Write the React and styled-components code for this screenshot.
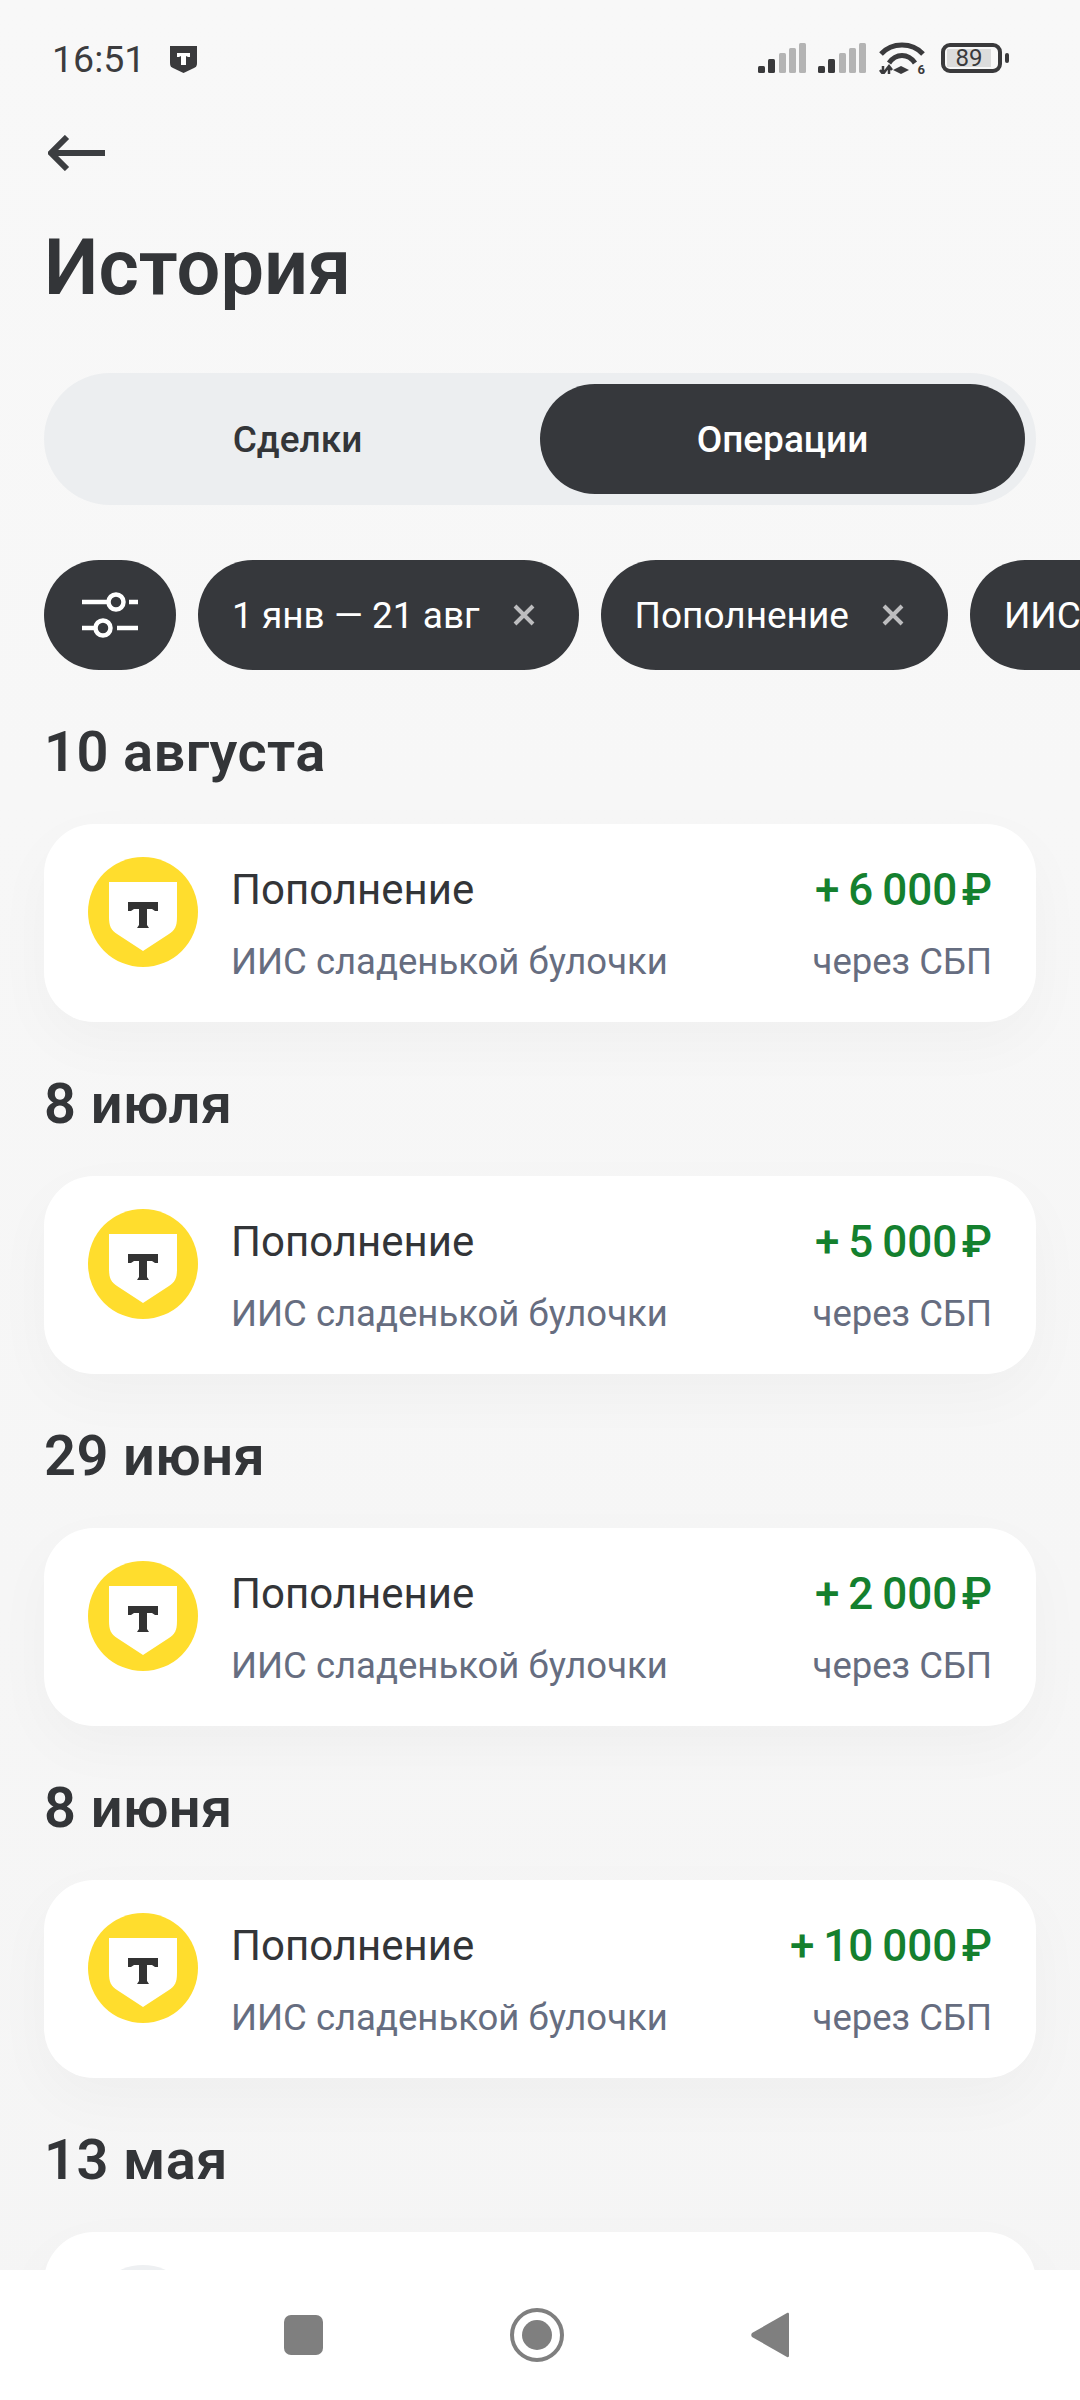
import React from 'react';
import styled, { createGlobalStyle } from 'styled-components';

const GlobalStyle = createGlobalStyle`
  html, body {
    margin: 0;
    padding: 0;
    background: #f6f6f7;
  }
  * {
    box-sizing: border-box;
  }
`;

const Screen = styled.div`
  width: 1080px;
  height: 2400px;
  display: flex;
  flex-direction: column;
  overflow: hidden;
  background: linear-gradient(#f8f8f8, #f5f5f5);
  font-family: Roboto, 'Noto Sans', sans-serif;
  color: #333538;
`;

const Content = styled.div`
  flex: 1;
  min-height: 0;
  overflow: hidden;
  display: flex;
  flex-direction: column;
`;

const StatusBar = styled.div`
  height: 118px;
  flex: none;
  display: flex;
  align-items: center;
  padding: 0 71px 0 52px;
`;

const Time = styled.span`
  font-size: 37.5px;
  line-height: 40px;
  color: #3c3c3e;
  margin-right: 25px;
`;

const StatusIcons = styled.div`
  margin-left: auto;
  display: flex;
  align-items: center;
  margin-top: -3px;
`;

const WifiBox = styled.div`
  position: relative;
  width: 46px;
  height: 32px;
  margin: 0 16px 0 13px;
`;

const WifiNumber = styled.span`
  position: absolute;
  right: 0;
  bottom: -2px;
  font-size: 13px;
  line-height: 13px;
  font-weight: 700;
  color: #3a3a3c;
`;

const Battery = styled.div`
  width: 61px;
  height: 30px;
  border: 4px solid #3a3a3c;
  border-radius: 9px;
  padding: 2px 7px 2px 2px;
  display: flex;
`;

const BatteryLevel = styled.div`
  flex: 1;
  background: #dcdcdc;
  font-size: 24px;
  line-height: 18px;
  text-align: center;
  color: #3a3a3c;
`;

const BatteryNub = styled.div`
  width: 4px;
  height: 10px;
  margin-left: 3px;
  border-radius: 2px;
  background: #3a3a3c;
`;

const BackRow = styled.div`
  height: 70px;
  flex: none;
  display: flex;
  align-items: center;
  padding-left: 48px;
`;

const Title = styled.h1`
  margin: 35px 0 0;
  padding-left: 44px;
  font-size: 77.5px;
  line-height: 90px;
  font-weight: 600;
  color: #333538;
`;

const Segment = styled.div`
  flex: none;
  margin: 60px 44px 0;
  height: 132px;
  padding: 11px;
  border-radius: 66px;
  background: #eceef0;
  display: grid;
  grid-template-columns: 1fr 1fr;
`;

const SegmentItem = styled.div`
  display: flex;
  align-items: center;
  justify-content: center;
  border-radius: 55px;
  font-size: 37px;
  font-weight: 500;
  background: ${(props) => (props.active ? '#36383c' : 'transparent')};
  color: ${(props) => (props.active ? '#fff' : '#333538')};
`;

const Chips = styled.div`
  flex: none;
  margin-top: 55px;
  padding-left: 44px;
  display: flex;
  gap: 22px;
  height: 110px;
  overflow: hidden;
`;

const FilterButton = styled.div`
  flex: none;
  width: 132px;
  border-radius: 55px;
  background: #36383c;
  display: flex;
  align-items: center;
  justify-content: center;
`;

const Chip = styled.div`
  flex: none;
  display: flex;
  align-items: center;
  gap: 33px;
  padding: 0 44px 0 34px;
  border-radius: 55px;
  background: #36383c;
  color: #fff;
  font-size: 37px;
  white-space: nowrap;
`;

const DateTitle = styled.h2`
  margin: 0;
  padding-left: 44px;
  font-size: 56px;
  line-height: 64px;
  font-weight: 600;
  letter-spacing: 0.4px;
  color: #333538;
`;

const Section = styled.section`
  flex: none;
  margin-top: 50px;
`;

const Card = styled.div`
  margin: 40px 44px 0;
  height: 198px;
  padding: 33px 44px 0;
  border-radius: 50px;
  background: #fff;
  box-shadow: 0 20px 60px rgba(0, 0, 0, 0.03);
  display: flex;
  align-items: flex-start;
  gap: 33px;
`;

const CardBody = styled.div`
  flex: 1;
  margin-top: 8px;
  display: grid;
  grid-template-columns: 1fr auto;
  row-gap: 22px;
`;

const Name = styled.div`
  font-size: 42px;
  line-height: 50px;
  color: #333538;
`;

const Amount = styled.div`
  font-size: 44px;
  line-height: 50px;
  font-weight: 500;
  color: #14802e;
  text-align: right;
`;

const Note = styled.div`
  font-size: 36.5px;
  line-height: 50px;
  color: #666d80;
  text-align: ${(props) => (props.right ? 'right' : 'left')};
`;

const NavBar = styled.div`
  flex: none;
  height: 130px;
  background: #fff;
  display: flex;
  align-items: center;
  padding-left: 284px;
`;

const NavSquare = styled.div`
  width: 39px;
  height: 40px;
  border-radius: 7px;
  background: #7f7f7f;
  margin-right: 187px;
`;

const NavCircle = styled.div`
  width: 54px;
  height: 54px;
  border-radius: 50%;
  border: 4px solid #7f7f7f;
  display: flex;
  align-items: center;
  justify-content: center;
  margin-right: 187px;
  &::after {
    content: '';
    width: 30px;
    height: 30px;
    border-radius: 50%;
    background: #7f7f7f;
  }
`;

const Signal = ({ gap }) => {
  const bars = [
    [0, 7, '#3a3a3c'],
    [10, 14, '#3a3a3c'],
    [21, 20, '#b4b4b4'],
    [31, 25, '#b4b4b4'],
    [41, 30, '#b4b4b4'],
  ];
  return (
    <svg width="48" height="30" viewBox="0 0 48 30" style={{ marginRight: gap }}>
      {bars.map(([x, h, fill]) => (
        <rect key={x} x={x} y={30 - h} width="7" height={h} rx="1.5" fill={fill} />
      ))}
    </svg>
  );
};

const Wifi = () => (
  <WifiBox>
    <svg width="46" height="32" viewBox="0 0 46 32" fill="none">
      <path d="M2 12C13 0 33 0 44 12" stroke="#3a3a3c" strokeWidth="5" />
      <path d="M10 21C17 11 29 11 36 21" stroke="#3a3a3c" strokeWidth="5" />
      <path d="M22 24l8 4-8 4-8-4z" fill="#3a3a3c" />
      <path d="M4 24v8M1 28l3 4 3-4M10 32v-8M7 28l3-4 3 4" stroke="#3a3a3c" strokeWidth="2.500" />
    </svg>
    <WifiNumber>6</WifiNumber>
  </WifiBox>
);

const StatusShield = () => (
  <svg width="27" height="27" viewBox="0 0 27 27">
    <path d="M0 0H27V17c0 3-1 4-3 5L13.500 27 3 22c-2-1-3-2-3-5z" fill="#3a3a3c" />
    <path d="M7 7H20V11H18L16 10V19H11V10L9 11H7z" fill="#fff" />
  </svg>
);

const BackArrow = () => (
  <svg width="58" height="36" viewBox="0 0 58 36" fill="none">
    <path d="M19 2L3 18l16 16M4 18H57" stroke="#3c3e41" strokeWidth="6" />
  </svg>
);

const FilterIcon = () => (
  <svg width="56" height="46" viewBox="0 0 56 46" fill="none" stroke="#fff" strokeWidth="4.500">
    <path d="M0 10H26M47 10H56M0 36H12M35 36H56" />
    <circle cx="34" cy="10" r="7.500" />
    <circle cx="21" cy="36" r="7.500" />
  </svg>
);

const CloseIcon = () => (
  <svg width="22" height="22" viewBox="0 0 22 22" fill="none">
    <path d="M2 2L20 20M20 2L2 20" stroke="#bdbdbf" strokeWidth="4" />
  </svg>
);

const Logo = () => (
  <svg width="110" height="110" viewBox="0 0 110 110" style={{ flex: 'none' }}>
    <circle cx="55" cy="55" r="55" fill="#ffdd2d" />
    <path d="M21 25H89V60c0 9-2 13-8 17L55 94 29 77c-6-4-8-8-8-17z" fill="#fff" />
    <path d="M40 45H70V54H67L64 52H59V68L61 71H49L51 68V52H46L43 54H40z" fill="#333" />
  </svg>
);

const BackTriangle = () => (
  <svg width="38" height="46" viewBox="0 0 38 46">
    <path d="M36 1L1 21c-1 1-1 3 0 4l35 20c1 .5 2 0 2-1V2c0-1-1-1.500-2-1z" fill="#7f7f7f" />
  </svg>
);

const LogoPlaceholder = styled.div`
  width: 110px;
  height: 110px;
  flex: none;
  border-radius: 50%;
  background: #eef0f2;
`;

const operations = [
  { date: '10 августа', amount: '+\u20096\u2009000\u200A₽' },
  { date: '8 июля', amount: '+\u20095\u2009000\u200A₽' },
  { date: '29 июня', amount: '+\u20092\u2009000\u200A₽' },
  { date: '8 июня', amount: '+\u200910\u2009000\u200A₽' },
];

export default function App() {
  return (
    <>
      <GlobalStyle />
      <Screen>
        <Content>
          <StatusBar>
            <Time>16:51</Time>
            <StatusShield />
            <StatusIcons>
              <Signal gap="12px" />
              <Signal />
              <Wifi />
              <Battery>
                <BatteryLevel>89</BatteryLevel>
              </Battery>
              <BatteryNub />
            </StatusIcons>
          </StatusBar>
          <BackRow>
            <BackArrow />
          </BackRow>
          <Title>История</Title>
          <Segment>
            <SegmentItem>Сделки</SegmentItem>
            <SegmentItem active>Операции</SegmentItem>
          </Segment>
          <Chips>
            <FilterButton>
              <FilterIcon />
            </FilterButton>
            <Chip>
              1 янв — 21 авг
              <CloseIcon />
            </Chip>
            <Chip>
              Пополнение
              <CloseIcon />
            </Chip>
            <Chip>ИИС сладенькой булочки</Chip>
          </Chips>
          {operations.map((op) => (
            <Section key={op.date}>
              <DateTitle>{op.date}</DateTitle>
              <Card>
                <Logo />
                <CardBody>
                  <Name>Пополнение</Name>
                  <Amount>{op.amount}</Amount>
                  <Note>ИИС сладенькой булочки</Note>
                  <Note right>через СБП</Note>
                </CardBody>
              </Card>
            </Section>
          ))}
          <Section>
            <DateTitle>13 мая</DateTitle>
            <Card>
              <LogoPlaceholder />
            </Card>
          </Section>
        </Content>
        <NavBar>
          <NavSquare />
          <NavCircle />
          <BackTriangle />
        </NavBar>
      </Screen>
    </>
  );
}
